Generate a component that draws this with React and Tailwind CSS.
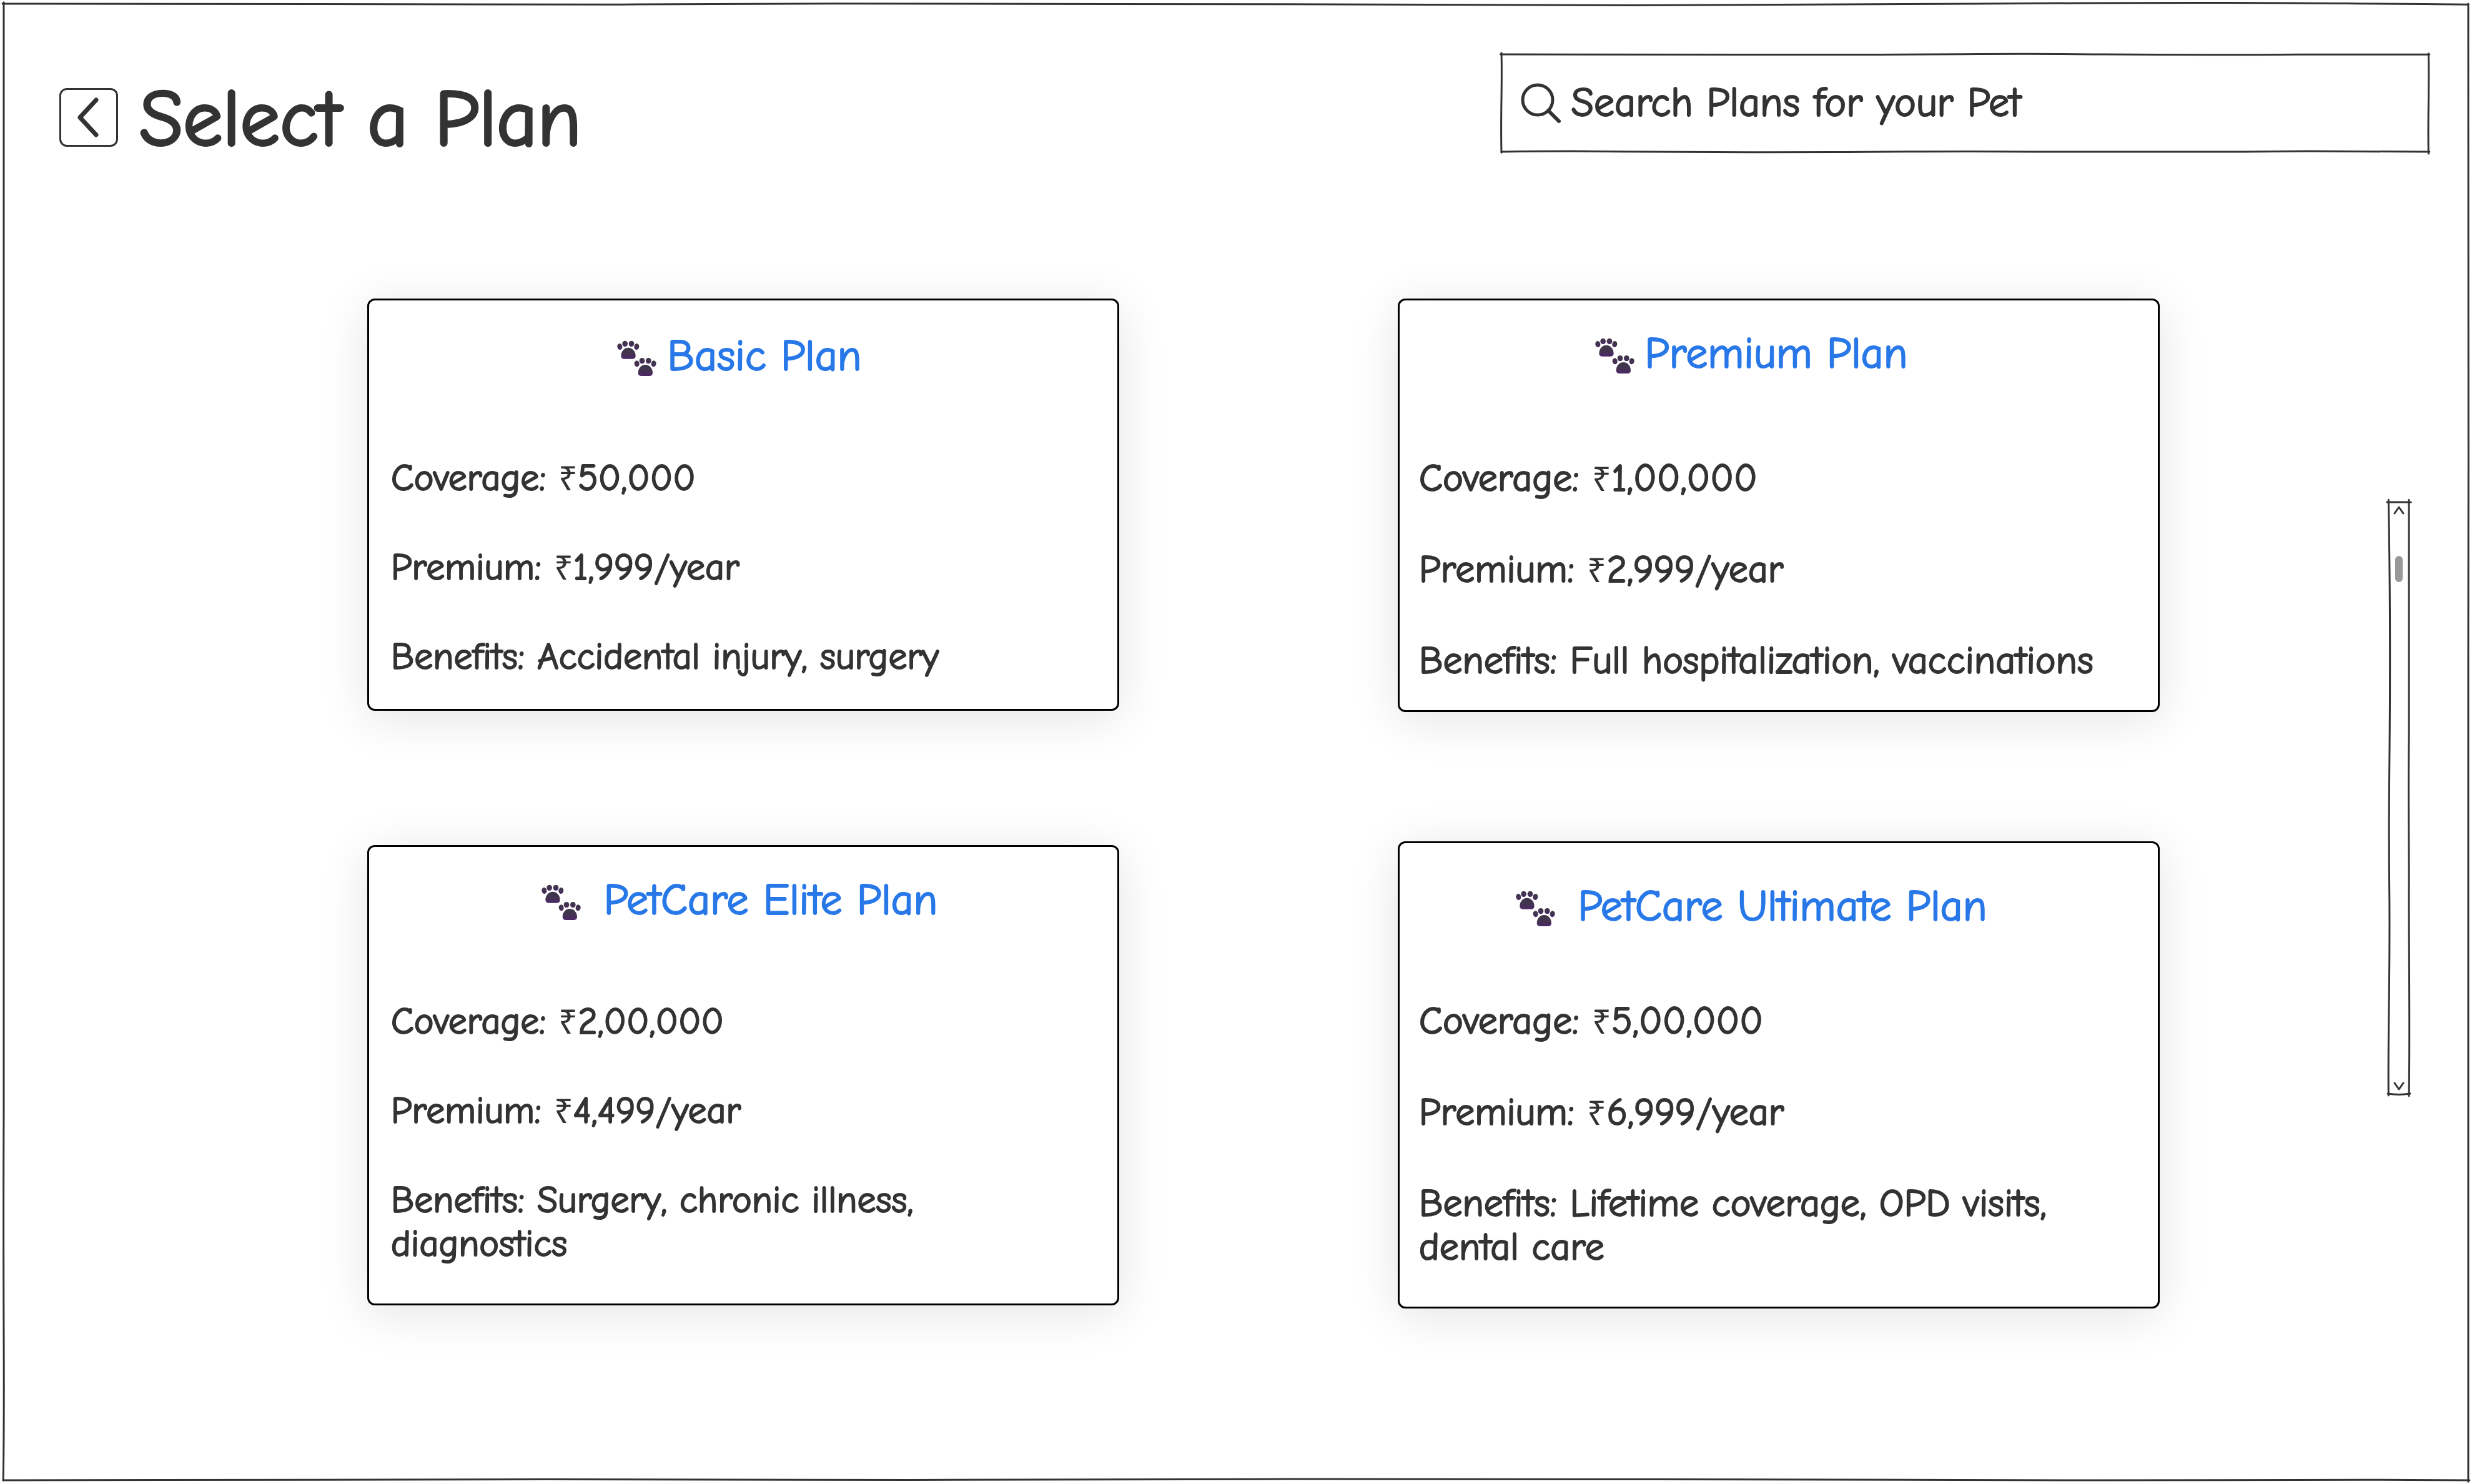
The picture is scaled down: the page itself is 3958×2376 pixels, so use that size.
import { useId } from "react";

const plans = {
  left: [
    {
      name: "Basic Plan",
      lines: [["Coverage: ", "50,000"], ["Premium: ", "1,999/year"], ["Benefits: Accidental injury, surgery"]],
      head: "h-[250px] pt-[64px] pr-[12px] gap-[16px]",
      foot: "pb-[48px]",
    },
    {
      name: "PetCare Elite Plan",
      lines: [["Coverage: ", "2,00,000"], ["Premium: ", "4,499/year"], ["Benefits: Surgery, chronic illness, diagnostics"]],
      head: "h-[245px] pt-[60px] pr-[12px] gap-[36px]",
      foot: "pb-[60px]",
    },
  ],
  right: [
    {
      name: "Premium Plan",
      lines: [["Coverage: ", "1,00,000"], ["Premium: ", "2,999/year"], ["Benefits: Full hospitalization, vaccinations"]],
      head: "h-[250px] pt-[60px] pr-[88px] gap-[16px]",
      foot: "pb-[44px]",
    },
    {
      name: "PetCare Ultimate Plan",
      lines: [["Coverage: ", "5,00,000"], ["Premium: ", "6,999/year"], ["Benefits: Lifetime coverage, OPD visits, dental care"]],
      head: "h-[250px] pt-[76px] pr-[88px] gap-[36px]",
      foot: "pb-[60px]",
    },
  ],
};

/* Hand-drawn outline that stretches over its positioned parent. */
function SketchOutline({ paths }) {
  return (
    <svg
      aria-hidden="true"
      viewBox="0 0 1000 1000"
      preserveAspectRatio="none"
      className="pointer-events-none absolute inset-0 h-full w-full overflow-visible"
      fill="none"
      stroke="#333333"
      strokeWidth="3"
      strokeLinecap="round"
    >
      {paths.map((d) => (
        <path key={d} d={d} vectorEffect="non-scaling-stroke" />
      ))}
    </svg>
  );
}

const pageOutline = [
  "M-0.5 0 C80 0 160 1 250 0.5 S420 -1 520 0.3 S700 1.2 800 0 S930 -0.5 1000 0.5",
  "M0 -1 C0 100 -0.3 200 0 330 S0.4 600 0 750 S0.5 930 -0.2 1000",
  "M1000 0 C999.6 200 1000.4 300 1000 450 S999.5 800 1000 1001",
  "M-0.3 1000 C60 1000.5 120 999 220 999.4 S420 1000 520 999.2 S760 1000.5 850 1000 S950 999.5 1000.5 1000",
];

const searchOutline = [
  "M-1 0 C200 0 260 4 380 3 S520 -9 600 -4 S730 12 860 1 L1001 2",
  "M0 -14 C1 300 -1 600 0 1008",
  "M1000 -8 C1001 300 999 700 1000 1020",
  "M0 1000 C40 994 90 992 130 998 S280 1008 360 1003 S500 992 580 1000 L800 1000 L870 994 L1001 1000",
];

const scrollOutline = [
  "M-100 0 L1100 0",
  "M-20 -4 C10 60 60 120 50 300 S-30 500 20 650 S-60 900 -20 1002",
  "M1000 -4 L1000 400 C960 500 1010 560 1000 650 S1060 900 1000 1003",
  "M-60 999 C300 1001 700 1001 1060 999",
];

function Paws() {
  const id = useId();
  return (
    <svg aria-hidden="true" viewBox="88 76 192 172" className="h-[58px] w-[64px] shrink-0">
      <defs>
        <linearGradient id={`${id}-shade`} x1="0" y1="0" x2="0" y2="1">
          <stop offset="0" stopColor="#40384a" />
          <stop offset="0.55" stopColor="#43334f" />
          <stop offset="1" stopColor="#4d2669" />
        </linearGradient>
        <g id={`${id}-print`} fill={`url(#${id}-shade)`}>
          <ellipse cx="101" cy="105" rx="12" ry="15" transform="rotate(-10 101 105)" />
          <ellipse cx="126" cy="91" rx="13" ry="14" />
          <ellipse cx="157" cy="91" rx="13" ry="14" />
          <ellipse cx="182" cy="105" rx="12" ry="15" transform="rotate(10 182 105)" />
          <path d="M142 110 C162 110 177 128 177 149 C177 159 171 164 161 164 L124 164 C113 164 107 159 107 149 C107 128 122 110 142 110 Z" />
        </g>
      </defs>
      <use href={`#${id}-print`} />
      <use href={`#${id}-print`} x="82" y="82" />
    </svg>
  );
}

function Rupee() {
  return <span className="font-['Liberation_Sans',sans-serif] text-[54px] leading-none [-webkit-text-stroke:0px]">₹</span>;
}

function PlanCard({ plan, rows }) {
  return (
    <article
      className={`rounded-[12px] border-3 border-black bg-white shadow-[0_12px_80px_rgba(0,0,0,0.11)] ${plan.foot}`}
    >
      <header className={`flex items-start justify-center ${plan.head}`}>
        <Paws />
        <h2 className="whitespace-nowrap text-[70px] leading-[52px] text-[#2878e8] [-webkit-text-stroke:2px_#2878e8]">
          {plan.name}
        </h2>
      </header>
      <div className={`flex flex-col pr-[40px] leading-[70px] ${rows}`}>
        {plan.lines.map(([text, amount]) => (
          <p key={text}>
            {text}
            {amount && <Rupee />}
            {amount}
          </p>
        ))}
      </div>
    </article>
  );
}

function ScrollArrow({ label, d }) {
  return (
    <button type="button" aria-label={label} className="flex h-[26px] items-center justify-center">
      <svg
        viewBox="0 0 20 16"
        className="h-[16px] w-[20px]"
        fill="none"
        stroke="#333333"
        strokeWidth="3"
        strokeLinecap="round"
        strokeLinejoin="round"
      >
        <path d={d} />
      </svg>
    </button>
  );
}

export default function App() {
  return (
    <div className="min-h-screen bg-white p-[6px] font-['Comic_Neue',Lato,sans-serif] text-[#333333] [-webkit-text-stroke:2px_#333333]">
      <div className="relative min-h-[calc(100vh-12px)] pt-[81px]">
        <SketchOutline paths={pageOutline} />
        <header className="grid grid-cols-[2308fr_1484fr] items-start pl-[89px] pr-[64px]">
          <div className="mt-[51px] flex items-center gap-[34px]">
            <button
              type="button"
              aria-label="Back"
              className="flex h-[94px] w-[94px] items-center justify-center rounded-[12px] border-3 border-[#333333]"
            >
              <svg
                viewBox="0 0 40 64"
                className="h-[64px] w-[40px]"
                fill="none"
                stroke="#333333"
                strokeWidth="7"
                strokeLinecap="round"
                strokeLinejoin="round"
              >
                <path d="M32 4 L6 32 L32 60" />
              </svg>
            </button>
            <h1 className="whitespace-nowrap pt-[6px] text-[127px] leading-[94px] [-webkit-text-stroke:4px_#333333]">
              Select a Plan
            </h1>
          </div>
          <label className="relative flex h-[156px] items-center gap-[16px] pl-[30px]">
            <SketchOutline paths={searchOutline} />
            <svg
              aria-hidden="true"
              viewBox="0 0 66 66"
              className="h-[66px] w-[66px] shrink-0"
              fill="none"
              stroke="#333333"
              strokeWidth="5"
              strokeLinecap="round"
            >
              <circle cx="28" cy="28" r="24" />
              <path d="M45 45 L62 62" strokeWidth="6" />
            </svg>
            <input
              type="search"
              aria-label="Search plans"
              placeholder="Search Plans for your Pet"
              className="min-w-0 flex-1 bg-transparent text-[66px] leading-[80px] outline-none placeholder:text-[#333333] placeholder:opacity-100"
            />
          </label>
        </header>

        <main className="mt-[235px] grid grid-cols-[582fr_1204fr_446fr_1220fr_367fr_32fr_95fr] items-start pb-[120px]">
          <section className="col-start-2 flex flex-col gap-[215px]">
            {plans.left.map((plan) => (
              <PlanCard key={plan.name} plan={plan} rows="gap-[73px] pl-[35px] text-[60px]" />
            ))}
          </section>
          <section className="col-start-4 flex flex-col gap-[207px]">
            {plans.right.map((plan) => (
              <PlanCard key={plan.name} plan={plan} rows="gap-[76px] pl-[31px] text-[62px]" />
            ))}
          </section>
          <div
            role="scrollbar"
            aria-label="Plans"
            aria-orientation="vertical"
            aria-valuenow={10}
            aria-controls="root"
            className="relative col-start-6 mt-[326px] flex h-[948px] flex-col"
          >
            <SketchOutline paths={scrollOutline} />
            <ScrollArrow label="Scroll up" d="M3 13 L10 3 L17 13" />
            <div className="flex flex-1 justify-center pt-[60px]">
              <span className="h-[42px] w-[12px] rounded-full bg-[#999999]" />
            </div>
            <ScrollArrow label="Scroll down" d="M3 3 L10 13 L17 3" />
          </div>
        </main>
      </div>
    </div>
  );
}
